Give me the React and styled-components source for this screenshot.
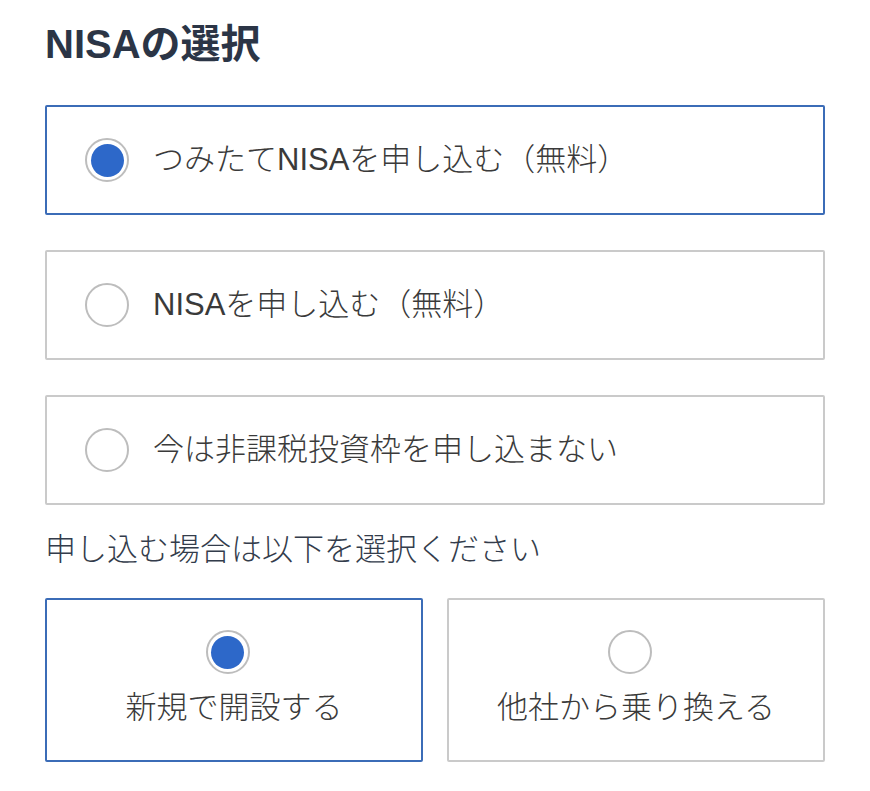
import React, { useState } from "react";
import styled, { createGlobalStyle } from "styled-components";

const GlobalStyle = createGlobalStyle`
  body {
    margin: 0;
    background: #ffffff;
    font-family: "Liberation Sans", "Noto Sans CJK JP", sans-serif;
  }
`;

const plans = [
  { id: "tsumitate", label: "つみたてNISAを申し込む（無料）" },
  { id: "nisa", label: "NISAを申し込む（無料）" },
  { id: "none", label: "今は非課税投資枠を申し込まない" },
];

const routes = [
  { id: "new", label: "新規で開設する" },
  { id: "transfer", label: "他社から乗り換える" },
];

export default function App() {
  const [plan, setPlan] = useState("tsumitate");
  const [route, setRoute] = useState("new");

  return (
    <>
      <GlobalStyle />
      <Page>
        <Heading>NISAの選択</Heading>
        <OptionList>
          {plans.map((p) => (
            <OptionCard key={p.id} selected={plan === p.id} onClick={() => setPlan(p.id)}>
              <Radio checked={plan === p.id} />
              <OptionText>{p.label}</OptionText>
            </OptionCard>
          ))}
        </OptionList>
        <SubLabel>申し込む場合は以下を選択ください</SubLabel>
        <TileRow>
          {routes.map((r) => (
            <Tile key={r.id} selected={route === r.id} onClick={() => setRoute(r.id)}>
              <TileRadio checked={route === r.id} />
              <OptionText>{r.label}</OptionText>
            </Tile>
          ))}
        </TileRow>
      </Page>
    </>
  );
}

const Page = styled.div`
  width: 780px;
  padding: 20px 45px 0;
`;

const Heading = styled.h2`
  margin: 0;
  font-size: 40px;
  line-height: 48px;
  font-weight: 700;
  color: #2b3546;
`;

const OptionList = styled.div`
  display: flex;
  flex-direction: column;
  gap: 35px;
  margin-top: 37px;
`;

const OptionCard = styled.div`
  box-sizing: border-box;
  height: 110px;
  display: flex;
  align-items: center;
  gap: 24px;
  padding-left: 38px;
  background: #fff;
  border: 2px solid ${(p) => (p.selected ? "#3b6cb7" : "#cacaca")};
  border-radius: 2px;
  cursor: pointer;
`;

const Radio = styled.span`
  box-sizing: border-box;
  flex: none;
  width: 44px;
  height: 44px;
  border-radius: 50%;
  border: 2px solid #bdbdbd;
  display: flex;
  align-items: center;
  justify-content: center;
  background: #fff;

  &::after {
    content: "";
    width: 33px;
    height: 33px;
    border-radius: 50%;
    background: ${(p) => (p.checked ? "#2d68c9" : "transparent")};
  }
`;

const TileRadio = styled(Radio)`
  margin-right: 13px;
`;

const OptionText = styled.span`
  font-size: 31px;
  line-height: 40px;
  font-weight: 300;
  color: #3a3a3a;
`;

const SubLabel = styled.p`
  margin: 25px 0 0;
  font-size: 31px;
  line-height: 40px;
  font-weight: 300;
  color: #333c4b;
`;

const TileRow = styled.div`
  display: grid;
  grid-template-columns: 378px 378px;
  gap: 24px;
  margin-top: 28px;
`;

const Tile = styled.div`
  box-sizing: border-box;
  height: 164px;
  display: flex;
  flex-direction: column;
  align-items: center;
  justify-content: flex-start;
  padding-top: 30px;
  gap: 14px;
  background: #fff;
  border: 2px solid ${(p) => (p.selected ? "#3b6cb7" : "#cacaca")};
  border-radius: 2px;
  cursor: pointer;
`;
